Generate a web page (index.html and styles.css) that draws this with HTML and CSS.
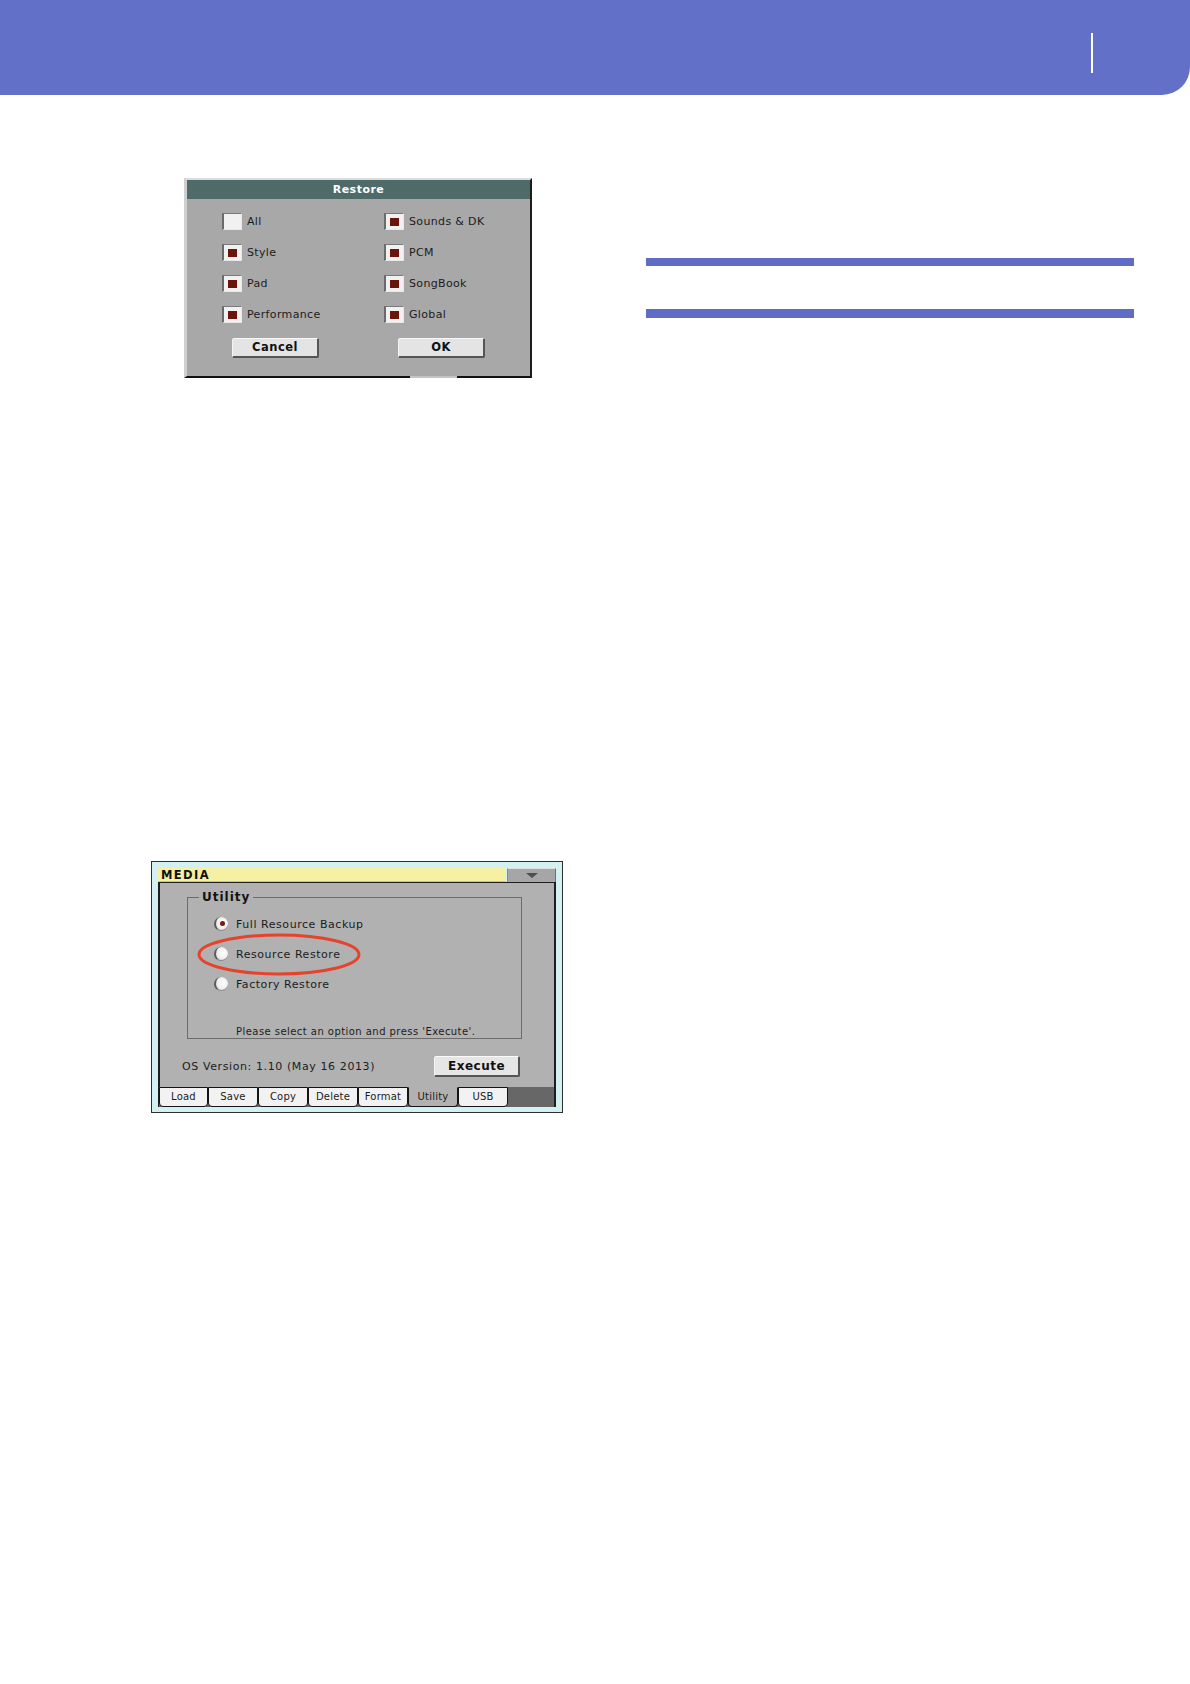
FILE: index.html
```html
<!DOCTYPE html>
<html lang="en">
<head>
<meta charset="utf-8">
<title>Restore</title>
<link rel="stylesheet" href="styles.css">
</head>
<body>
<header class="top"><span class="top-mark"></span></header>
<main class="page">
  <section class="left">
    <div class="dialog">
      <div class="dialog-title">Restore</div>
      <div class="dialog-grid">
        <div class="check"><span class="box"></span><span>All</span></div>
        <div class="check"><span class="box on"></span><span>Sounds &amp; DK</span></div>
        <div class="check"><span class="box on"></span><span>Style</span></div>
        <div class="check"><span class="box on"></span><span>PCM</span></div>
        <div class="check"><span class="box on"></span><span>Pad</span></div>
        <div class="check"><span class="box on"></span><span>SongBook</span></div>
        <div class="check"><span class="box on"></span><span>Performance</span></div>
        <div class="check"><span class="box on"></span><span>Global</span></div>
      </div>
      <div class="dialog-buttons">
        <span class="btn">Cancel</span>
        <span class="btn">OK</span>
      </div>
    </div>

    <div class="media">
      <div class="media-head">
        <div class="media-title">MEDIA</div>
        <div class="media-drop"><span class="tri"></span></div>
      </div>
      <div class="media-body">
        <div class="group">
          <span class="legend">Utility</span>
          <div class="radio-row"><span class="radio sel"></span><span>Full Resource Backup</span></div>
          <div class="radio-row"><span class="radio"></span><span>Resource Restore</span></div>
          <div class="radio-row"><span class="radio"></span><span>Factory Restore</span></div>
          <div class="note">Please select an option and press 'Execute'.</div>
        </div>
        <div class="os-row">
          <span class="os">OS Version: 1.10 (May 16 2013)</span>
          <span class="exec">Execute</span>
        </div>
      </div>
      <div class="tabs">
        <span class="tab">Load</span>
        <span class="tab">Save</span>
        <span class="tab">Copy</span>
        <span class="tab">Delete</span>
        <span class="tab">Format</span>
        <span class="tab active">Utility</span>
        <span class="tab">USB</span>
      </div>
      <svg class="circle-mark" width="164" height="43" viewBox="0 0 164 43" aria-hidden="true">
        <ellipse cx="82" cy="21.5" rx="80" ry="19.5" fill="none" stroke="#e5432c" stroke-width="3"/>
      </svg>
    </div>
  </section>

  <section class="right">
    <div class="rule"></div>
    <div class="rule rule-2"></div>
  </section>
</main>
</body>
</html>
```

FILE: styles.css
```css
html, body {
  margin: 0;
  padding: 0;
  background: #ffffff;
}

body {
  width: 1190px;
  min-height: 1684px;
  font-family: "DejaVu Sans", "Noto Sans", sans-serif;
  color: #1e1e1e;
}

/* ---------- header band ---------- */
.top {
  height: 95px;
  box-sizing: border-box;
  background: #6370c8;
  border-bottom-right-radius: 28px;
  display: flex;
  justify-content: flex-end;
  align-items: flex-start;
  padding: 33px 97px 0 0;
}

.top-mark {
  width: 2px;
  height: 40px;
  background: #ffffff;
}

/* ---------- page columns ---------- */
.page {
  display: flex;
}

.left {
  width: 646px;
  flex: none;
  display: flex;
  flex-direction: column;
  align-items: flex-start;
}

.right {
  width: 488px;
  flex: none;
  display: flex;
  flex-direction: column;
}

.rule {
  height: 8px;
  margin-top: 163px;
  background: #5f6dc6;
}

.rule-2 {
  height: 9px;
  margin-top: 43px;
}

/* ---------- Restore dialog ---------- */
.dialog {
  position: relative;
  margin: 83px 0 0 184px;
  width: 348px;
  height: 200px;
  box-sizing: border-box;
  background: #a8a8a8;
  border-top: 2px solid #dcdcdc;
  border-left: 3px solid #cfcfcf;
  border-right: 2px solid #1c1c1c;
  border-bottom: 2px solid #111111;
}

.dialog::after {
  content: "";
  position: absolute;
  left: 223px;
  bottom: -2px;
  width: 47px;
  height: 2px;
  background: #c4c4c4;
}

.dialog-title {
  height: 19px;
  line-height: 19px;
  background: #4e6b69;
  color: #ffffff;
  font-weight: bold;
  font-size: 11px;
  letter-spacing: 0.5px;
  text-align: center;
}

.dialog-grid {
  display: grid;
  grid-template-columns: 162px 1fr;
  grid-auto-rows: 31px;
  padding: 7px 0 0 35px;
}

.check {
  display: flex;
  align-items: center;
  gap: 5px;
  font-size: 11px;
  letter-spacing: 0.35px;
  color: #1c1c1c;
}

.box {
  width: 20px;
  height: 17px;
  box-sizing: border-box;
  background: #f1f1f1;
  border-left: 2px solid #6a6a6a;
  border-top: 1px solid #7a7a7a;
  border-right: 1px solid #e8e8e8;
  border-bottom: 1px solid #e8e8e8;
  display: flex;
  align-items: center;
  justify-content: center;
}

.box.on::before {
  content: "";
  width: 9px;
  height: 8px;
  background: #6a150c;
}

.dialog-buttons {
  display: flex;
  gap: 79px;
  padding: 8px 0 0 45px;
}

.btn {
  width: 87px;
  height: 20px;
  box-sizing: border-box;
  background: #e4e4e4;
  border-top: 1px solid #f8f8f8;
  border-left: 1px solid #f4f4f4;
  border-right: 2px solid #555555;
  border-bottom: 2px solid #555555;
  border-radius: 2px;
  text-align: center;
  line-height: 17px;
  font-weight: bold;
  font-size: 11.5px;
  letter-spacing: 0.5px;
  color: #111111;
}

/* ---------- MEDIA panel ---------- */
.media {
  position: relative;
  margin: 483px 0 0 151px;
  width: 412px;
  height: 252px;
  box-sizing: border-box;
  border: 1px solid #2e2e2e;
  background: #d4f1f2;
  padding: 6px 6px 5px 6px;
}

.media-head {
  display: flex;
  height: 14px;
}

.media-title {
  flex: 1;
  background: #f6f0a3;
  border-bottom: 1px solid #c9c48a;
  font-weight: bold;
  font-size: 11.5px;
  line-height: 14px;
  letter-spacing: 1.4px;
  padding-left: 3px;
  color: #111111;
}

.media-drop {
  width: 49px;
  margin-left: 1px;
  box-sizing: border-box;
  background: #a6a6a6;
  border-top: 1px solid #dedede;
  border-left: 1px solid #8a8a8a;
  border-right: 1px solid #6e6e6e;
  display: flex;
  align-items: center;
  justify-content: center;
}

.tri {
  width: 0;
  height: 0;
  border-left: 6px solid transparent;
  border-right: 6px solid transparent;
  border-top: 5px solid #4e4e4e;
}

.media-body {
  height: 205px;
  box-sizing: border-box;
  background: #b1b1b1;
  border-left: 2px solid #1e1e1e;
  border-right: 2px solid #1e1e1e;
  border-top: 1px solid #1e1e1e;
  padding-top: 14px;
}

.group {
  position: relative;
  margin-left: 27px;
  width: 335px;
  height: 142px;
  box-sizing: border-box;
  border: 1px solid #6c6c6c;
  padding: 11px 0 0 26px;
  display: flex;
  flex-direction: column;
}

.legend {
  position: absolute;
  top: -8px;
  left: 11px;
  padding: 0 3px;
  background: #b1b1b1;
  font-weight: bold;
  font-size: 12px;
  line-height: 14px;
  letter-spacing: 1px;
  color: #111111;
}

.radio-row {
  height: 30px;
  display: flex;
  align-items: center;
  gap: 8px;
  font-size: 11px;
  letter-spacing: 0.55px;
  color: #1c1c1c;
}

.radio {
  width: 14px;
  height: 14px;
  box-sizing: border-box;
  border-radius: 50%;
  background: radial-gradient(circle at 60% 45%, #ffffff 0%, #efefef 55%, #cfcfcf 100%);
  border-left: 2px solid #5a5a5a;
  border-bottom: 1px solid #8a8a8a;
  display: flex;
  align-items: center;
  justify-content: center;
}

.radio.sel::before {
  content: "";
  width: 5px;
  height: 5px;
  border-radius: 50%;
  background: #7a1a12;
}

.note {
  margin: 26px 0 0 22px;
  font-size: 10px;
  letter-spacing: 0.45px;
  line-height: 13px;
  color: #1c1c1c;
}

.os-row {
  display: flex;
  justify-content: space-between;
  align-items: center;
  width: 338px;
  height: 21px;
  margin: 17px 0 0 22px;
}

.os {
  font-size: 11px;
  letter-spacing: 0.6px;
  color: #1c1c1c;
}

.exec {
  width: 86px;
  height: 21px;
  box-sizing: border-box;
  background: #e6e6e6;
  border-top: 1px solid #fafafa;
  border-left: 1px solid #f4f4f4;
  border-right: 2px solid #555555;
  border-bottom: 2px solid #555555;
  border-radius: 2px;
  text-align: center;
  line-height: 18px;
  font-weight: bold;
  font-size: 12px;
  letter-spacing: 0.5px;
  color: #111111;
}

.tabs {
  display: flex;
  height: 20px;
  background: #676767;
  border-left: 1px solid #1e1e1e;
  border-right: 2px solid #1e1e1e;
}

.tab {
  width: 50px;
  box-sizing: border-box;
  background: #f2f2f2;
  border: 1px solid #141414;
  border-radius: 0 0 4px 4px;
  text-align: center;
  font-size: 10px;
  letter-spacing: 0.2px;
  line-height: 18px;
  color: #1c1c1c;
}

.tab:first-child {
  width: 49px;
}

.tab.active {
  background: #b1b1b1;
  border-top-color: #b1b1b1;
}

.circle-mark {
  position: absolute;
  left: 45px;
  top: 71px;
}
```
